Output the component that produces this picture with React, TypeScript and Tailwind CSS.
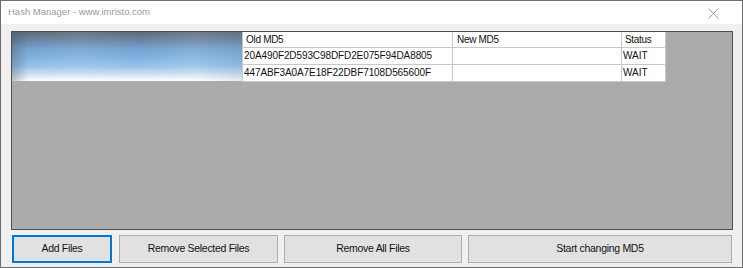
import React from "react";

const ui = { fontFamily: '"Liberation Sans", Arial, sans-serif' };

function Btn({ label, w, focused }: { label: string; w: string; focused?: boolean }) {
  return (
    <div
      className={`${w} h-[28px] flex items-center justify-center bg-[#e1e1e1] text-[10.5px] tracking-[-0.3px] text-[#111] ${
        focused ? "border-2 border-[#0078d7]" : "border border-[#adadad]"
      }`}
    >
      {label}
    </div>
  );
}

export default function App() {
  const rows = [
    "20A490F2D593C98DFD2E075F94DA8805",
    "447ABF3A0A7E18F22DBF7108D565600F",
  ];
  return (
    <div className="w-[743px] h-[268px] border border-[#6e6e6e] flex flex-col bg-[#f0f0f0]" style={ui}>
      <div className="h-[23px] bg-white flex items-center justify-between pl-[7px] pr-[23px] shrink-0">
        <span className="text-[9.5px] text-[#9a9a9a]">Hash Manager - www.imristo.com</span>
        <svg width="11" height="11" viewBox="0 0 11 11" className="mt-[1px]">
          <path d="M0.5 0.5 L10.5 10.5 M10.5 0.5 L0.5 10.5" stroke="#9a9a9a" strokeWidth="1" />
        </svg>
      </div>
      <div className="flex-1 flex flex-col pl-[10px] pr-[9px] pt-[7px]">
        <div className="h-[199px] border border-[#4f4f4f] bg-[#ababab] flex items-start">
          <div
            className="w-[230px] h-[49px] relative overflow-hidden"
            style={{
              background:
                "linear-gradient(180deg, #5f6b77 0%, #6882a0 16%, #74a2cf 34%, #7fb2e0 52%, #98c2e8 70%, #cde0f1 86%, #eef4fa 95%, #ffffff 100%)",
            }}
          >
            <div
              className="absolute inset-0"
              style={{
                background:
                  "linear-gradient(90deg, rgba(70,80,90,0.35) 0%, rgba(255,255,255,0) 7%, rgba(255,255,255,0.08) 30%, rgba(255,255,255,0) 55%, rgba(255,255,255,0.1) 80%, rgba(120,140,160,0.15) 100%)",
              }}
            />
          </div>
          <div className="flex flex-col text-[10px] text-[#111]">
            <div className="flex h-[16px] bg-white">
              <div className="w-[210px] border-l border-b border-[#c8c8c8] pl-[3px] leading-[15px] tracking-[-0.3px]">Old MD5</div>
              <div className="w-[169px] border-l border-b border-[#c8c8c8] pl-[4px] leading-[15px] tracking-[-0.3px]">New MD5</div>
              <div className="w-[45px] border-l border-r border-b border-[#c8c8c8] pl-[3px] leading-[15px] tracking-[-0.3px]">Status</div>
            </div>
            {rows.map((r) => (
              <div key={r} className="flex h-[17px] bg-white">
                <div className="w-[210px] border-l border-b border-[#c8c8c8] pl-[1px] leading-[16px] tracking-[-0.1px]">{r}</div>
                <div className="w-[169px] border-l border-b border-[#c8c8c8]"></div>
                <div className="w-[45px] border-l border-r border-b border-[#c8c8c8] pl-[1px] leading-[16px]">WAIT</div>
              </div>
            ))}
          </div>
        </div>
        <div className="flex mt-[5px] ml-[1px] mr-[1px] gap-[7px]">
          <Btn label="Add Files" w="w-[100px]" focused />
          <Btn label="Remove Selected Files" w="w-[159px]" />
          <div className="w-[178px] -ml-[1px]"><Btn label="Remove All Files" w="w-[178px]" /></div>
          <div className="flex-1 -ml-[1px]"><Btn label="Start changing MD5" w="w-full" /></div>
        </div>
      </div>
    </div>
  );
}
